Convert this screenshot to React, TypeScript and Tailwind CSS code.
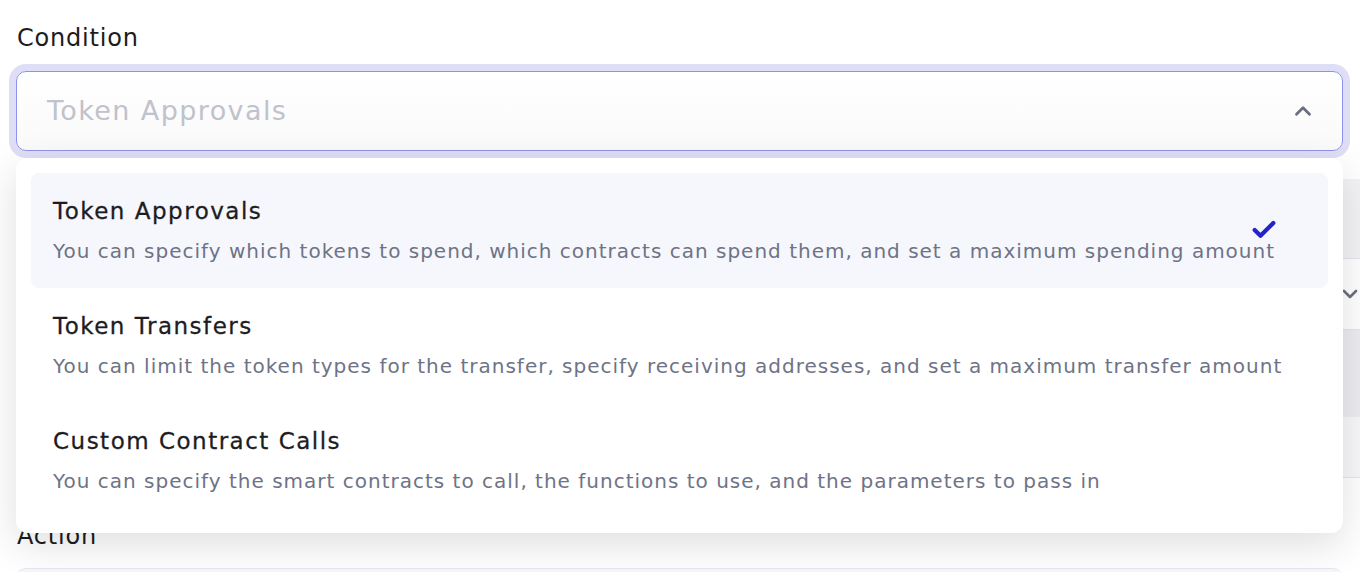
import { Check, ChevronDown, ChevronUp } from "lucide-react";

const options = [
  {
    title: "Token Approvals",
    desc: "You can specify which tokens to spend, which contracts can spend them, and set a maximum spending amount",
    selected: true,
  },
  {
    title: "Token Transfers",
    desc: "You can limit the token types for the transfer, specify receiving addresses, and set a maximum transfer amount",
    selected: false,
  },
  {
    title: "Custom Contract Calls",
    desc: "You can specify the smart contracts to call, the functions to use, and the parameters to pass in",
    selected: false,
  },
];

export default function App() {
  return (
    <div className="w-[1360px] h-[572px] overflow-hidden bg-white font-['DejaVu_Sans',sans-serif]">
      <div className="pt-[22px] pl-[16px] pr-[16px]">
        <div className="pl-[1px] text-[24px] leading-[32px] tracking-[0.8px] text-[#1c1c1c]">Condition</div>

        <div className="relative mt-[17px] w-[1327px]">
          <div className="flex h-[80px] items-center justify-between rounded-[10px] border border-[#8e92ea] bg-gradient-to-b from-white to-[#fafafa] pl-[30px] pr-[26px] shadow-[0_0_0_7px_#dedff6]">
            <span className="text-[27px] tracking-[1.4px] text-[#c0c2cc]">Token Approvals</span>
            <ChevronUp size={26} strokeWidth={2.6} className="text-[#6b7080]" />
          </div>

          {/* menu */}
          <div className="absolute left-0 right-0 top-[calc(100%+7px)] z-10 rounded-[12px] bg-white p-[15px] shadow-[0_12px_40px_rgba(0,0,0,0.13)]">
            {options.map((o) => (
              <div
                key={o.title}
                className={`relative h-[115px] rounded-[8px] px-[22px] pt-[23px] ${o.selected ? "bg-[#f6f7fc]" : ""}`}
              >
                <div className="text-[23px] leading-[30px] tracking-[1.5px] text-[#1d1d1f] [-webkit-text-stroke:0.3px_#1d1d1f]">
                  {o.title}
                </div>
                <div className="mt-[13px] text-[20px] leading-[24px] tracking-[1px] text-[#6e7386]">{o.desc}</div>
                {o.selected && (
                  <Check size={28} strokeWidth={3.6} className="absolute right-[50px] top-[43px] text-[#2323c9]" />
                )}
              </div>
            ))}
          </div>
        </div>

        {/* content under the menu */}
        <div className="mt-[28px] w-[1376px]">
          <div className="h-[80px] border-b border-[#e4e4ea] bg-[#f3f3f5]" />
          <div className="flex h-[71px] items-center justify-end border-b border-[#e4e4ea] pr-[30px]">
            <ChevronDown size={24} strokeWidth={2.6} className="text-[#6b7080]" />
          </div>
          <div className="h-[87px] bg-[#ececf1]" />
          <div className="h-[61px] border-b border-[#e4e4ea] bg-[#f8f8fa]" />
        </div>

        <div className="mt-[42px] pl-[1px] text-[24px] leading-[32px] tracking-[0.8px] text-[#1c1c1c]">Action</div>
        <div className="mt-[16px] h-[60px] w-[1327px] rounded-t-[10px] border-t border-[#e6e6ee] bg-[#f7f7fb]" />
      </div>
    </div>
  );
}
